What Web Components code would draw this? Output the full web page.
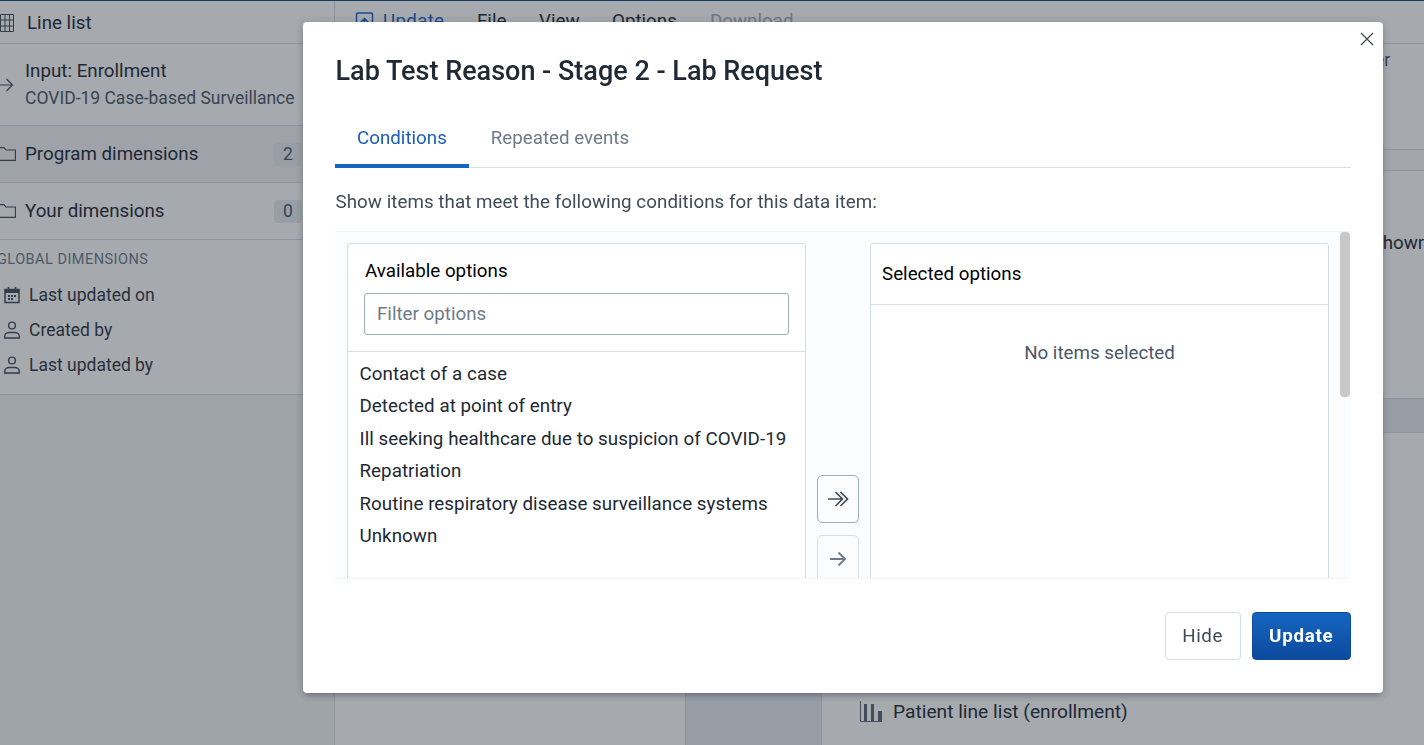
<!DOCTYPE html>
<html>
<head>
<meta charset="utf-8">
<title>Line list</title>
<style>
html, body { margin: 0; height: 100%; overflow: hidden; background: #fff; }
body { font-family: Roboto, "Liberation Sans", sans-serif; font-size: 18.75px; color: #212934; }
</style>
</head>
<body>
<app-shell>
  <side-bar slot="side">
    <side-row kind="type" icon="table" label="Line list"></side-row>
    <side-row kind="input" icon="arrow" label="Input: Enrollment" sub="COVID-19 Case-based Surveillance"></side-row>
    <side-row kind="group" active icon="folder" label="Program dimensions" count="2"></side-row>
    <side-row kind="group" icon="folder" label="Your dimensions" count="0"></side-row>
    <side-global></side-global>
  </side-bar>
  <main-area slot="main"></main-area>
</app-shell>

<lab-modal>
  <span slot="title">Lab Test Reason - Stage 2 - Lab Request</span>
  <tab-bar slot="tabs"></tab-bar>
  <span slot="desc">Show items that meet the following conditions for this data item:</span>
  <option-transfer slot="body"></option-transfer>
  <ui-button slot="actions">Hide</ui-button>
  <ui-button slot="actions" primary>Update</ui-button>
</lab-modal>

<script>
const icons = {
  table: '<svg width="14" height="18" viewBox="0 0 14 18" fill="none" stroke="currentColor"><path d="M.5.500h13v17H.5zM.5 6h13M.5 12h13M5 .500v17M9.500.500v17"/></svg>',
  arrow: '<svg width="18" height="18" viewBox="0 0 18 18" fill="none" stroke="currentColor" stroke-width="1.2"><path d="M1 9h14M9.500 3l6 6-6 6"/></svg>',
  folder: '<svg width="16" height="14" viewBox="0 0 16 14" fill="none" stroke="currentColor" stroke-width="1.1"><path d="M-3 .600h7l2 2.400h9.400v10.400H-3z"/></svg>',
  calendar: '<svg width="18" height="18" viewBox="0 0 18 18" fill="none" stroke="currentColor" stroke-width="1.5"><path d="M2 3.500h14v13H2z"/><path stroke-width="3" d="M2 5.500h14"/><path d="M5.500 1v3M12.500 1v3"/><path stroke-width="1.8" d="M5 10h2M8 10h2M11 10h2M5 13h2M8 13h2"/></svg>',
  person: '<svg width="18" height="18" viewBox="0 0 18 18" fill="none" stroke="currentColor" stroke-width="1.400"><circle cx="9" cy="4.500" r="3.400"/><path d="M1.700 17v-1.500c0-2.500 2.300-4 4.300-4h6c2 0 4.300 1.500 4.300 4V17z"/></svg>',
  upload: '<svg width="20" height="20" viewBox="0 0 20 20" fill="none" stroke="currentColor" stroke-width="1.500"><path d="M6 16H3a1.500 1.500 0 0 1-1.500-1.500v-11A1.500 1.500 0 0 1 3 2h13a1.500 1.500 0 0 1 1.500 1.500v11A1.500 1.500 0 0 1 16 16h-3M9.500 18V8M5.500 11.500l4-4 4 4"/></svg>',
  close: '<svg width="14" height="14" viewBox="0 0 14 14" fill="none" stroke="currentColor" stroke-width="1.300"><path d="M1 1l12 12M13 1L1 13"/></svg>',
  double: '<svg width="22" height="18" viewBox="0 0 22 18" fill="none" stroke="currentColor" stroke-width="1.700"><path d="M1 9h15M8.500 2l7 7-7 7M13.500 2l7 7-7 7"/></svg>',
  single: '<svg width="18" height="18" viewBox="0 0 18 18" fill="none" stroke="currentColor" stroke-width="1.800"><path d="M1 9h15M9.500 2.500L16 9l-6.500 6.500"/></svg>',
  chart: '<svg width="22" height="21" viewBox="0 0 22 21" fill="none" stroke="currentColor"><path d="M.5 0v20.500H22"/><path stroke-width="3" d="M5.500 3v17M12.500 3v17"/><path stroke-width="4" d="M20 10v10"/></svg>'
};

class AppShell extends HTMLElement {
  constructor() {
    super();
    this.attachShadow({ mode: "open" }).innerHTML = `
      <style>
        :host { display: flex; height: 100vh; border-top: 1px solid #0f4c81; box-sizing: border-box; overflow: hidden; }
        .side { flex: 0 0 334px; border-right: 1px solid #d5dde5; background: #f3f5f8; }
        .main { flex: 1; min-width: 0; }
      </style>
      <div class="side"><slot name="side"></slot></div>
      <div class="main"><slot name="main"></slot></div>`;
  }
}

class SideBar extends HTMLElement {
  constructor() {
    super();
    this.attachShadow({ mode: "open" }).innerHTML = `
      <style>:host { display: block; background: #fff; }</style><slot></slot>`;
  }
}

class SideRow extends HTMLElement {
  connectedCallback() {
    const sub = this.getAttribute("sub");
    const count = this.getAttribute("count");
    this.attachShadow({ mode: "open" }).innerHTML = `
      <style>
        :host { display: flex; align-items: center; box-sizing: border-box; border-bottom: 1px solid #d5dde5; color: #212934; line-height: 22px; }
        :host([kind="type"]) { height: 43px; padding-top: 1px; }
        :host([kind="input"]) { height: 82px; }
        :host([kind="group"]) { height: 57px; }
        :host([active]) { background: #f3f5f7; }
        .ic { display: flex; color: #404b5a; flex: none; }
        :host([kind="type"]) .ic { width: 27px; }
        :host([kind="input"]) .ic { margin-left: -3px; width: 28px; }
        :host([kind="group"]) .ic { width: 25px; }
        .text { flex: 1; }
        .sub { color: #4a5768; margin-top: 5px; font-size: 17.5px; }
        .count { width: 28px; height: 23px; line-height: 23px; margin-right: 32px; text-align: center; background: #e8edf2; color: #4a5768; border-radius: 3px; font-size: 17.5px; }
      </style>
      <span class="ic">${icons[this.getAttribute("icon")]}</span>
      <div class="text">
        <div>${this.getAttribute("label")}</div>
        ${sub ? `<div class="sub">${sub}</div>` : ""}
      </div>
      ${count ? `<span class="count">${count}</span>` : ""}`;
  }
}

class SideGlobal extends HTMLElement {
  constructor() {
    super();
    const items = [["calendar", "Last updated on"], ["person", "Created by"], ["person", "Last updated by"]];
    this.attachShadow({ mode: "open" }).innerHTML = `
      <style>
        :host { display: block; height: 155px; box-sizing: border-box; border-bottom: 1px solid #d5dde5; padding-top: 10px; }
        h4 { margin: 1px 0 8px -3px; font-size: 14.500px; font-weight: 400; line-height: 18px; letter-spacing: .47px; color: #6e7a8a; text-transform: uppercase; }
        .item { display: flex; align-items: center; height: 35px; padding-left: 3px; gap: 8px; color: #404b5a; }
        .item svg { flex: none; }
        .item span { font-size: 17.500px; color: #2c3542; }
      </style>
      <h4>Global dimensions</h4>
      ${items.map(i => `<div class="item">${icons[i[0]]}<span>${i[1]}</span></div>`).join("")}`;
  }
}

class MainArea extends HTMLElement {
  constructor() {
    super();
    this.attachShadow({ mode: "open" }).innerHTML = `
      <style>
        :host { display: flex; flex-direction: column; height: 100%; overflow: hidden; }
        .bar { flex: 0 0 43px; box-sizing: border-box; display: flex; align-items: center; border-bottom: 1px solid #d5dde5; height: 43px; padding: 0 0 2px 20px; }
        .bar span { white-space: nowrap; }
        .up { display: flex; align-items: center; gap: 8px; color: #1565c0; width: 122px; }
        .up span { letter-spacing: .3px; }
        .file { width: 62px; } .view { width: 73px; } .opts { width: 98px; }
        .dl { color: #a0adba; }
        .title { flex: 0 0 106px; box-sizing: border-box; border-bottom: 1px solid #d5dde5; padding: 6px 0 0 1040px; font-size: 17.5px; color: #4a5768; line-height: 20px; }
        .strip { flex: 0 0 21px; box-sizing: border-box; background: #f8f9fa; border-bottom: 1px solid #d5dde5; }
        .row { flex: 1; display: flex; min-height: 0; }
        .left { flex: 0 0 350px; border-right: 1px solid #d5dde5; }
        .mid { flex: 0 0 135px; background: #e8edf2; border-right: 1px solid #d5dde5; }
        .right { flex: 1; display: flex; flex-direction: column; min-width: 0; }
        .shown { height: 227px; box-sizing: border-box; padding: 61px 0 0 551px; white-space: nowrap; line-height: 22px; }
        .band { flex: 0 0 35px; background: #e8edf2; border-top: 1px solid #d5dde5; border-bottom: 1px solid #d5dde5; box-sizing: border-box; }
        .list { flex: 1; display: flex; align-items: flex-end; }
        .rec { display: flex; align-items: center; gap: 11px; padding: 0 0 22px 38px; color: #5a6778; }
        .rec span { color: #212934; font-size: 19.2px; }
      </style>
      <div class="bar">
        <span class="up">${icons.upload}<span>Update</span></span>
        <span class="file">File</span><span class="view">View</span><span class="opts">Options</span><span class="dl">Download</span>
      </div>
      <div class="title">er</div>
      <div class="strip"></div>
      <div class="row">
        <div class="left"></div>
        <div class="mid"></div>
        <div class="right">
          <div class="shown">shown</div>
          <div class="band"></div>
          <div class="list"><div class="rec">${icons.chart}<span>Patient line list (enrollment)</span></div></div>
        </div>
      </div>`;
  }
}

class LabModal extends HTMLElement {
  constructor() {
    super();
    this.attachShadow({ mode: "open" }).innerHTML = `
      <style>
        :host { position: fixed; inset: 0; display: block; background: rgba(33,41,52,.4); padding: 22px 0 0 303px; box-sizing: border-box; }
        .box { position: relative; width: 1080px; height: 671px; box-sizing: border-box; background: #fff; border-radius: 4px; padding: 0 32px; box-shadow: 0 4px 6px -2px rgba(33,41,52,.3), 0 1px 8px rgba(33,41,52,.2); display: flex; flex-direction: column; }
        h1 { margin: 0 0 0 .5px; padding-top: 31px; font-size: 27px; line-height: 36px; font-weight: 500; color: #212934; height: 36px; }
        .close { position: absolute; top: 10px; right: 9px; color: #404b5a; display: flex; }
        .tabs { margin-top: 28px; }
        .desc { margin: 22px 0 0 .5px; line-height: 24px; color: #404b5a; height: 24px; letter-spacing: .05px; }
        .body { margin-top: 17px; height: 348px; }
        .foot { margin-top: 33px; display: flex; justify-content: flex-end; gap: 11px; }
      </style>
      <div class="box">
        <span class="close">${icons.close}</span>
        <h1><slot name="title"></slot></h1>
        <div class="tabs"><slot name="tabs"></slot></div>
        <div class="desc"><slot name="desc"></slot></div>
        <div class="body"><slot name="body"></slot></div>
        <div class="foot"><slot name="actions"></slot></div>
      </div>`;
  }
}

class TabBar extends HTMLElement {
  constructor() {
    super();
    this.attachShadow({ mode: "open" }).innerHTML = `
      <style>
        :host { display: flex; height: 51px; box-sizing: border-box; border-bottom: 1px solid #d5dde5; }
        .tab { padding: 9px 22px 0; color: #6e7a8a; line-height: 24px; height: 51px; box-sizing: border-box; }
        .on { color: #1b5fb5; border-bottom: 4px solid #1565c0; margin-bottom: -1px; }
      </style>
      <div class="tab on">Conditions</div>
      <div class="tab">Repeated events</div>`;
  }
}

class OptionTransfer extends HTMLElement {
  constructor() {
    super();
    const options = ["Contact of a case", "Detected at point of entry", "Ill seeking healthcare due to suspicion of COVID-19", "Repatriation", "Routine respiratory disease surveillance systems", "Unknown"];
    this.attachShadow({ mode: "open" }).innerHTML = `
      <style>
        :host { display: block; height: 100%; position: relative; overflow: hidden; background: #fbfcfd; border-top: 1px solid #f3f5f7; border-bottom: 1px solid #f3f5f7; box-sizing: border-box; padding: 11px 0 0 12px; }
        .row { display: flex; height: 500px; }
        .panel { width: 459px; box-sizing: border-box; background: #fff; border: 1px solid #d5dde5; border-radius: 3px 3px 0 0; }
        .head { height: 108px; box-sizing: border-box; border-bottom: 1px solid #d5dde5; padding: 15px 16px 0; }
        .head div { line-height: 24px; margin-left: 1px; color: #000; }
        .filter { width: 425px; height: 42px; box-sizing: border-box; margin-top: 10px; border: 1px solid #a0adba; border-radius: 3px; padding: 0 12px; line-height: 40px; color: #6e7a8a; display: block; }
        .opts { padding: 6px 11.5px; }
        .opts div { height: 32.400px; line-height: 32px; color: #212934; white-space: nowrap; letter-spacing: .05px; }
        .btns { width: 64px; box-sizing: border-box; padding: 232px 0 0 11px; }
        .btn { width: 42px; height: 48px; box-sizing: border-box; border: 1px solid #a0adba; border-radius: 5px; display: flex; align-items: center; justify-content: center; color: #404b5a; background: #fbfcfd; margin-bottom: 12px; }
        .btn.off { border-color: #d5dde5; color: #6e7a8a; }
        .sel .head { height: 61px; padding: 18px 11px 0; }
        .sel .head div { margin-left: 0; }
        .none { text-align: center; color: #4a5768; padding-top: 36px; line-height: 24px; }
        .bar { position: absolute; top: 0; right: 0; width: 12px; height: 100%; }
        .thumb { position: absolute; top: 0; left: 1px; width: 10px; height: 165px; background: #c8c8c8; border-radius: 4px; }
      </style>
      <div class="row">
        <div class="panel">
          <div class="head"><div>Available options</div><span class="filter">Filter options</span></div>
          <div class="opts">${options.map(o => `<div>${o}</div>`).join("")}</div>
        </div>
        <div class="btns"><div class="btn">${icons.double}</div><div class="btn off">${icons.single}</div></div>
        <div class="panel sel">
          <div class="head"><div>Selected options</div></div>
          <div class="none">No items selected</div>
        </div>
      </div>
      <div class="bar"><div class="thumb"></div></div>`;
  }
}

class UiButton extends HTMLElement {
  constructor() {
    super();
    this.attachShadow({ mode: "open" }).innerHTML = `
      <style>
        :host { display: block; height: 48px; box-sizing: border-box; padding: 0 16.5px; line-height: 46px; border: 1px solid #d5dde5; border-radius: 4px; color: #404b5a; background: #fff; letter-spacing: .6px; }
        :host([primary]) { border-color: #0e4c9a; color: #fff; font-weight: 700; background: linear-gradient(#1565c0, #0d4a9c); letter-spacing: .75px; padding: 0 16.5px; }
      </style><slot></slot>`;
  }
}

customElements.define("app-shell", AppShell);
customElements.define("side-bar", SideBar);
customElements.define("side-row", SideRow);
customElements.define("side-global", SideGlobal);
customElements.define("main-area", MainArea);
customElements.define("lab-modal", LabModal);
customElements.define("tab-bar", TabBar);
customElements.define("option-transfer", OptionTransfer);
customElements.define("ui-button", UiButton);
</script>
</body>
</html>
